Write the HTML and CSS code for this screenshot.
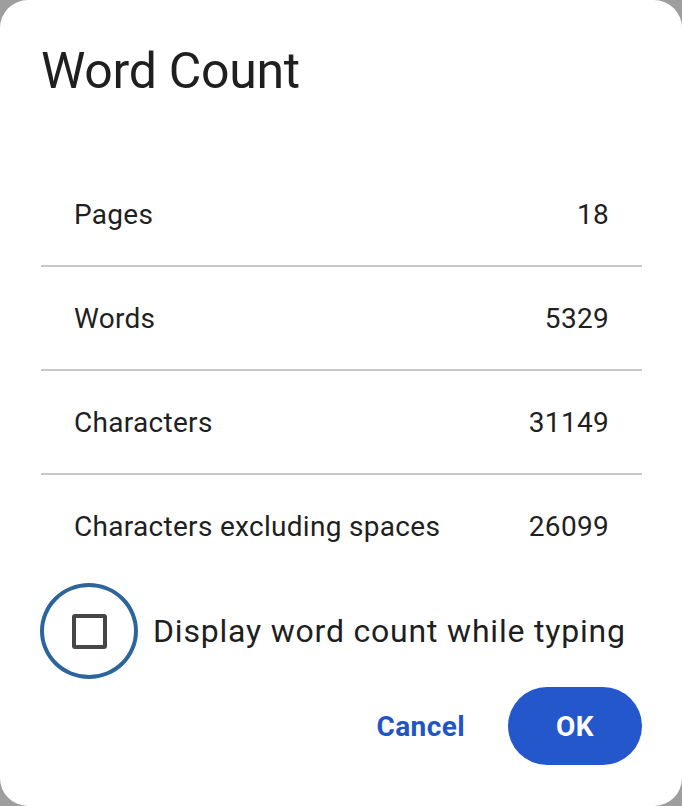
FILE: index.html
```html
<!DOCTYPE html>
<html lang="en">
<head>
    <meta charset="UTF-8">
    <meta name="viewport" content="width=device-width, initial-scale=1.0">
    <title>Word Count</title>
    <link rel="stylesheet" href="styles.css">
</head>
<body>
    <div class="dialog">
        <h1>Word Count</h1>

        <div class="stats">
            <div class="stat-row">
                <span>Pages</span>
                <span>18</span>
            </div>
            <div class="stat-row">
                <span>Words</span>
                <span>5329</span>
            </div>
            <div class="stat-row">
                <span>Characters</span>
                <span>31149</span>
            </div>
            <div class="stat-row">
                <span>Characters excluding spaces</span>
                <span>26099</span>
            </div>
        </div>

        <label class="option">
            <span class="focus-ring"><span class="box"></span></span>
            <span class="option-text">Display word count while typing</span>
        </label>

        <div class="actions">
            <button type="button" class="btn-text">Cancel</button>
            <button type="button" class="btn-ok">OK</button>
        </div>
    </div>
</body>
</html>
```

FILE: styles.css
```css
body {
    margin: 0;
    padding: 0;
    background-color: #9e9e9e;
    font-family: Roboto, "Liberation Sans", sans-serif;
    color: #1f1f1f;
}

.dialog {
    width: 682px;
    height: 806px;
    box-sizing: border-box;
    background: #fff;
    border-radius: 28px;
    padding: 47px 40px 0 41px;
}

.dialog h1 {
    margin: 0;
    font-size: 50px;
    font-weight: 400;
    line-height: 48px;
    letter-spacing: -0.3px;
}

.stats {
    margin-top: 68px;
}

.stat-row {
    display: flex;
    justify-content: space-between;
    align-items: center;
    height: 102px;
    padding: 0 33px;
    font-size: 28px;
    letter-spacing: 0.3px;
    border-bottom: 2px solid #c7c7c7;
}

.stat-row:last-child {
    border-bottom: none;
    height: 103px;
}

.option {
    display: flex;
    align-items: center;
    gap: 15px;
    margin: 5px 0 0 -1px;
}

.focus-ring {
    width: 90px;
    height: 88px;
    border: 4px solid #2c649c;
    border-radius: 50%;
    display: flex;
    align-items: center;
    justify-content: center;
}

.box {
    width: 27px;
    height: 27px;
    border: 4px solid #444746;
    border-radius: 3px;
}

.option-text {
    font-size: 32px;
    letter-spacing: 0.8px;
}

.actions {
    display: flex;
    justify-content: flex-end;
    align-items: center;
    gap: 20px;
    margin-top: 8px;
}

.actions button {
    font-family: Roboto, "Liberation Sans", sans-serif;
    font-size: 28px;
    font-weight: 700;
    letter-spacing: 0.4px;
    border: none;
    cursor: pointer;
}

.btn-text {
    background: none;
    color: #1f55c6;
    padding: 20px 23px;
}

.btn-ok {
    background-color: #2456cc;
    color: #fff;
    width: 134px;
    height: 78px;
    border-radius: 39px;
}
```
